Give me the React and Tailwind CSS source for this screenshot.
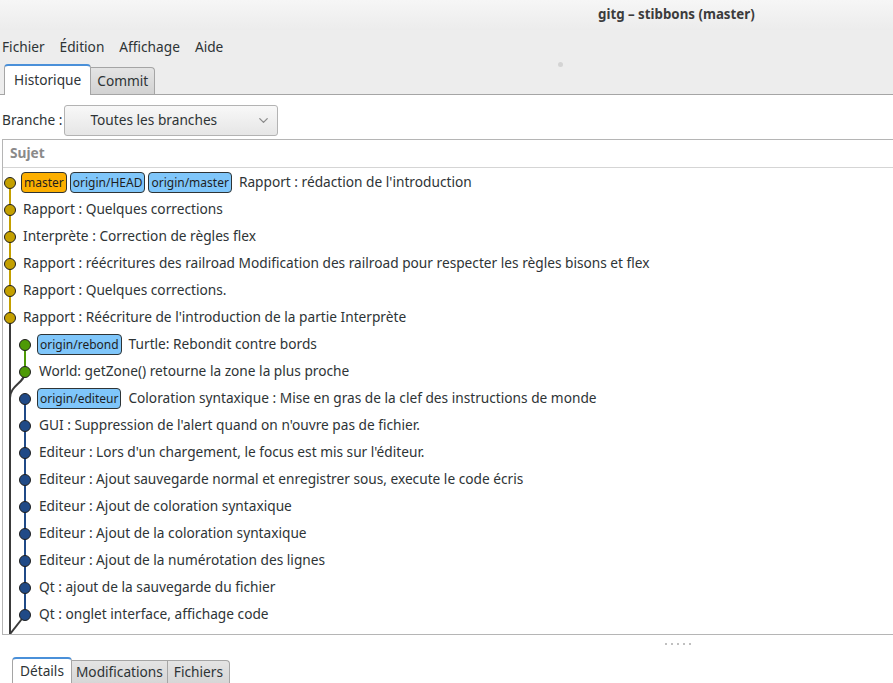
import { ChevronDown } from 'lucide-react';

const commits = [
    { lane: 0, labels: [['master', 'orange'], ['origin/HEAD', 'blue'], ['origin/master', 'blue']], text: "Rapport : rédaction de l'introduction" },
    { lane: 0, text: 'Rapport : Quelques corrections' },
    { lane: 0, text: 'Interprète : Correction de règles flex' },
    { lane: 0, text: 'Rapport : réécritures des railroad Modification des railroad pour respecter les règles bisons et flex' },
    { lane: 0, text: 'Rapport : Quelques corrections.' },
    { lane: 0, text: "Rapport : Réécriture de l'introduction de la partie Interprète" },
    { lane: 1, labels: [['origin/rebond', 'blue']], text: 'Turtle: Rebondit contre bords' },
    { lane: 1, text: 'World: getZone() retourne la zone la plus proche' },
    { lane: 1, labels: [['origin/editeur', 'blue']], text: 'Coloration syntaxique : Mise en gras de la clef des instructions de monde' },
    { lane: 1, text: "GUI : Suppression de l'alert quand on n'ouvre pas de fichier." },
    { lane: 1, text: "Editeur : Lors d'un chargement, le focus est mis sur l'éditeur." },
    { lane: 1, text: 'Editeur : Ajout sauvegarde normal et enregistrer sous, execute le code écris' },
    { lane: 1, text: 'Editeur : Ajout de coloration syntaxique' },
    { lane: 1, text: 'Editeur : Ajout de la coloration syntaxique' },
    { lane: 1, text: 'Editeur : Ajout de la numérotation des lignes' },
    { lane: 1, text: 'Qt : ajout de la sauvegarde du fichier' },
    { lane: 1, text: 'Qt : onglet interface, affichage code' },
];

function Label({ name, kind }) {
    return (
        <span
            className={
                'h-[21px] px-[2px] flex items-center rounded-[4px] border border-[#2e3436] text-[12px] leading-none text-[#1e1e1e] ' +
                (kind === 'orange' ? 'bg-[#fcaf00]' : 'bg-[#7fc6fa]')
            }
        >
            {name}
        </span>
    );
}

function Graph() {
    const y = (i) => 15 + 27 * i;
    const dots = commits.map((c, i) => {
        const x = c.lane === 0 ? 7 : 22;
        let fill = '#c4a000';
        if (i >= 6 && i <= 7) fill = '#4e9a06';
        if (i >= 8) fill = '#204a87';
        return <circle key={i} cx={x} cy={y(i)} r="5.5" fill={fill} stroke="#1f1f1f" strokeWidth="1" />;
    });
    return (
        <svg className="absolute left-0 top-0" width="40" height="466">
            <path d={`M7 ${y(0)} L7 ${y(5)}`} stroke="#c4a000" strokeWidth="2" fill="none" />
            <path d={`M7 ${y(5)} L7 466`} stroke="#3a3a3a" strokeWidth="2" fill="none" />
            <path d={`M22 ${y(6)} L22 ${y(7)}`} stroke="#4e9a06" strokeWidth="2" fill="none" />
            <path d={`M22 ${y(7)} C22 215 7 217 7 230`} stroke="#3a3a3a" strokeWidth="2" fill="none" />
            <path d={`M22 ${y(8)} L22 ${y(16)}`} stroke="#204a87" strokeWidth="2" fill="none" />
            <path d={`M22 ${y(16)} L7 466`} stroke="#3a3a3a" strokeWidth="2" fill="none" />
            {dots}
        </svg>
    );
}

export default function App() {
    return (
        <div className="w-[893px] h-[683px] overflow-hidden bg-white font-['Noto_Sans'] text-[13.7px] text-[#2e3436] flex flex-col">
            {/* barre de titre */}
            <div className="h-[30px] shrink-0 bg-gradient-to-b from-[#f6f6f6] to-[#ececec] flex items-center pl-[598px]">
                <span className="font-bold text-[13.3px] text-[#3c3c3c]">gitg – stibbons (master)</span>
            </div>

            {/* menu */}
            <div className="h-[32px] shrink-0 bg-[#ededed] flex items-center pt-[3px] pl-[2px] gap-[15px] text-[#2e3436]">
                <span>Fichier</span>
                <span>Édition</span>
                <span>Affichage</span>
                <span>Aide</span>
            </div>

            {/* onglets */}
            <div className="h-[33px] shrink-0 bg-[#ededed] border-b border-[#a5a5a5] flex items-end pl-[4px] relative">
                <div className="h-[31px] -mb-px px-[9px] flex items-center bg-white border border-b-0 border-[#a5a5a5] border-t-2 border-t-[#4a90d9] rounded-t-[4px]">
                    Historique
                </div>
                <div className="h-[27px] px-[6px] flex items-center bg-gradient-to-b from-[#e4e4e4] to-[#d2d2d2] border border-b-0 border-l-0 border-[#a5a5a5] rounded-tr-[4px]">
                    Commit
                </div>
                <span className="absolute left-[558px] top-[0px] w-[5px] h-[5px] rounded-full bg-[#d4d4d4]" />
            </div>

            {/* branche */}
            <div className="h-[44px] shrink-0 flex items-center pt-[6px] pl-[2px] gap-[2px]">
                <span>Branche :</span>
                <div className="w-[214px] h-[31px] rounded-[3px] border border-[#b3b3b3] bg-gradient-to-b from-[#f8f8f8] to-[#e6e6e6] flex items-center pl-[25px] pr-[6px] justify-between">
                    <span>Toutes les branches</span>
                    <ChevronDown size={15} strokeWidth={2} className="text-[#8a8a8a]" />
                </div>
            </div>

            {/* liste des commits */}
            <div className="ml-[2px] border-t border-l border-b border-[#b5b5b5] shrink-0">
                <div className="h-[28px] border-b border-[#d5d5d5] flex items-center pl-[7px] font-bold text-[#8a8a8a]">
                    Sujet
                </div>
                <div className="relative h-[466px] pt-[1px]">
                    <Graph />
                    {commits.map((c, i) => {
                        const hasLabels = !!c.labels;
                        let pad = c.lane === 0 ? 'pl-[20px]' : 'pl-[36px]';
                        if (hasLabels) pad = c.lane === 0 ? 'pl-[18px]' : 'pl-[34px]';
                        return (
                            <div key={i} className={'h-[27px] flex items-center whitespace-nowrap ' + pad}>
                                {hasLabels && (
                                    <div className="flex gap-[3px] mr-[7px]">
                                        {c.labels.map(([n, k]) => (
                                            <Label key={n} name={n} kind={k} />
                                        ))}
                                    </div>
                                )}
                                <span>{c.text}</span>
                            </div>
                        );
                    })}
                </div>
            </div>

            {/* poignée */}
            <div className="h-[22px] shrink-0 flex justify-start pl-[665px] pt-[8px] gap-[4px]">
                {[0, 1, 2, 3, 4].map((d) => (
                    <span key={d} className="w-[2px] h-[2px] bg-[#c0c0c0]" />
                ))}
            </div>

            {/* onglets du bas */}
            <div className="flex items-end pl-[12px] flex-1">
                <div className="h-[27px] px-[7px] flex items-center bg-white border border-b-0 border-[#a5a5a5] border-t-2 border-t-[#4a90d9] rounded-t-[4px]">
                    Détails
                </div>
                <div className="h-[24px] px-[4px] flex items-center bg-gradient-to-b from-[#e4e4e4] to-[#d6d6d6] border border-b-0 border-l-0 border-[#a5a5a5]">
                    Modifications
                </div>
                <div className="h-[24px] px-[6px] flex items-center bg-gradient-to-b from-[#e4e4e4] to-[#d6d6d6] border border-b-0 border-l-0 border-[#a5a5a5] rounded-tr-[4px]">
                    Fichiers
                </div>
            </div>
        </div>
    );
}
